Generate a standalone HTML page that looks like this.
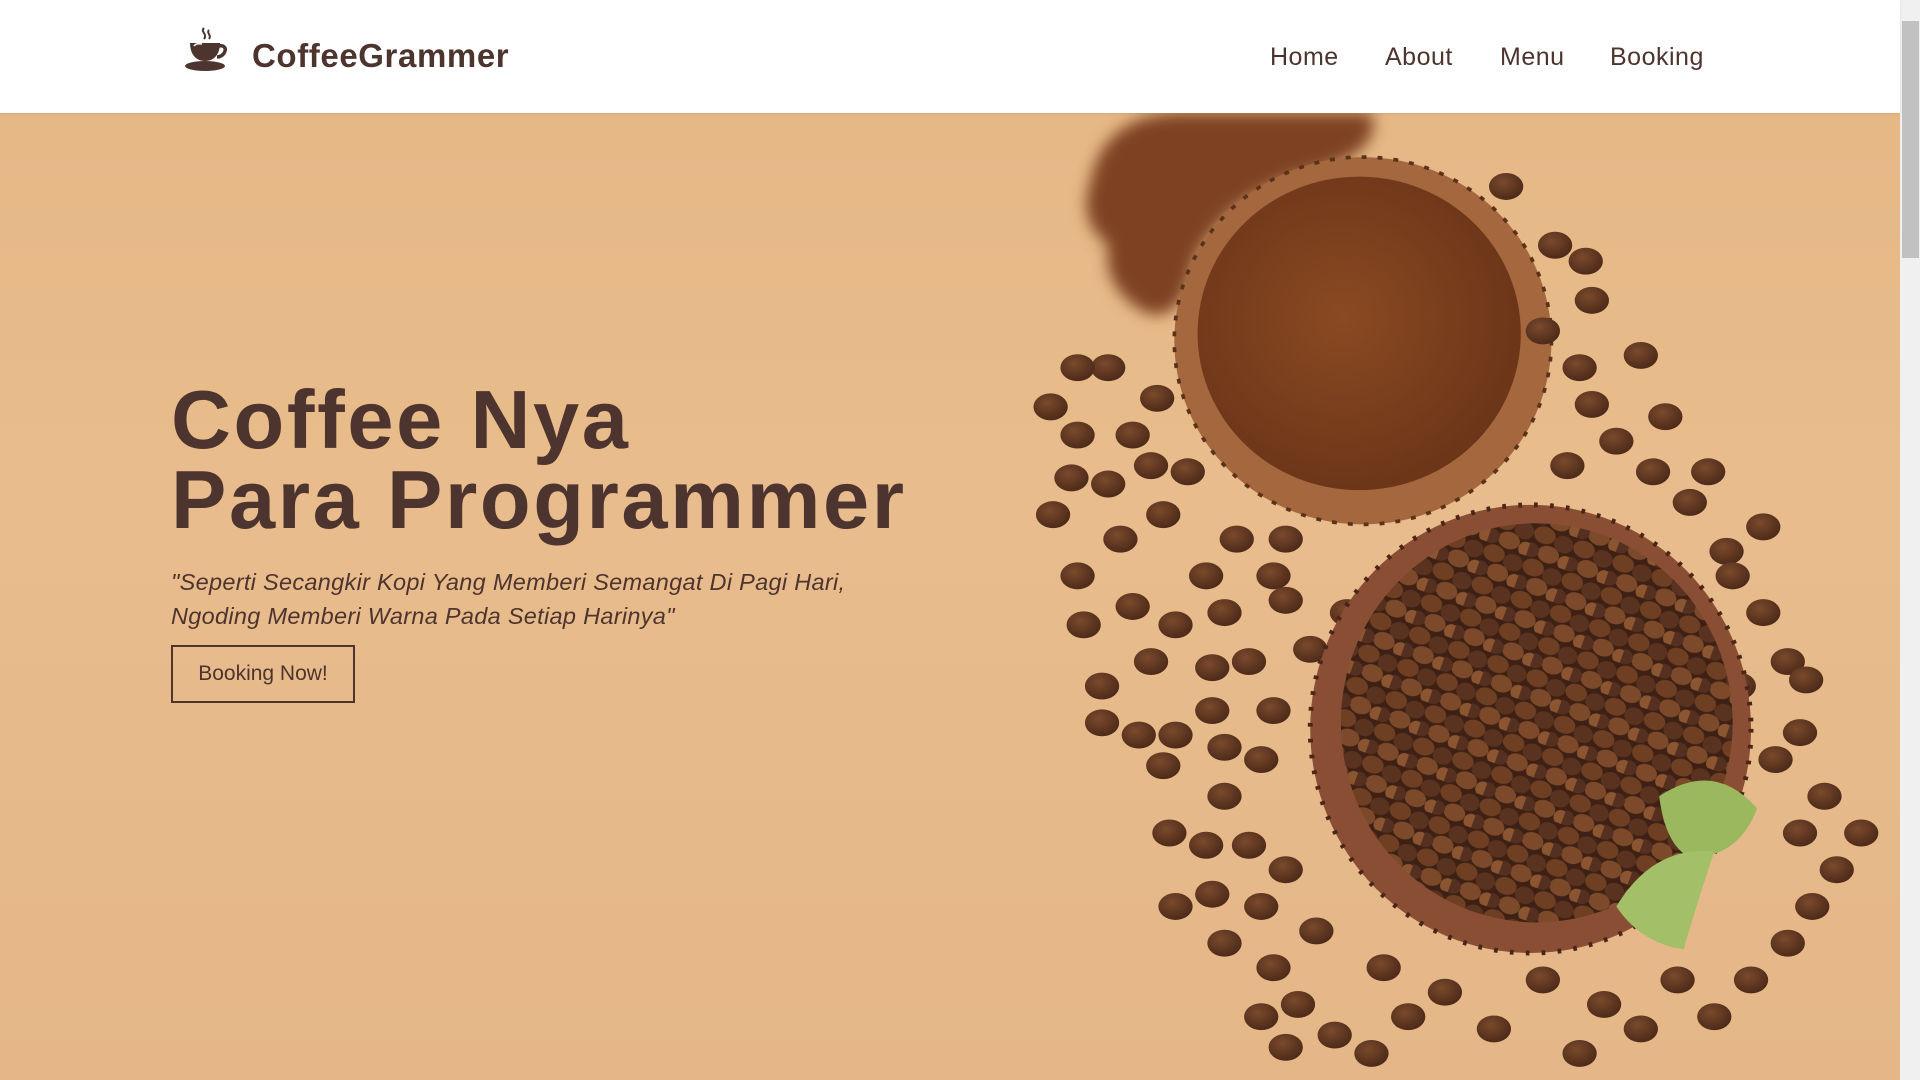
<!DOCTYPE html>
<html><head><meta charset="utf-8"><style>
*{margin:0;padding:0;box-sizing:border-box}
html,body{width:1920px;height:1080px;overflow:hidden;font-family:"Liberation Sans",sans-serif;color:#4e342e}
.hdr{position:absolute;left:0;top:0;width:1900px;height:113px;background:#fff;z-index:2;box-shadow:0 1px 3px rgba(0,0,0,.08)}
.logo{position:absolute;left:252px;top:37px;font-weight:bold;font-size:33px;letter-spacing:.6px;color:#4e342e}
.nav a{position:absolute;top:43px;font-size:25px;color:#4e342e;text-decoration:none;letter-spacing:.5px}
.hero{position:absolute;left:0;top:113px;width:1900px;height:967px;background:linear-gradient(180deg,#e6b886 0%,#e8bc8c 40%,#e5b788 100%)}
h1{position:absolute;left:171px;top:380px;font-size:83px;line-height:80px;font-weight:bold;letter-spacing:2.6px;color:#4e342e;z-index:3}
.sub{position:absolute;left:171px;top:565px;font-size:23.5px;line-height:34px;font-style:italic;color:#4e342e;z-index:3;letter-spacing:.3px}
.btn{position:absolute;left:171px;top:645px;width:184px;height:58px;border:2px solid #4e342e;font-size:21px;line-height:54px;text-align:center;z-index:3}
.sb{position:absolute;left:1900px;top:0;width:20px;height:1080px;background:#f0f0f0}
.sb .th{position:absolute;left:2px;top:21px;width:17px;height:237px;background:#c1c1c1}
</style></head><body>
<div class="hdr">
<svg style="position:absolute;left:182px;top:26px" width="50" height="48" viewBox="0 0 50 48">
<path d="M22 2c-4 4 4 6 0 11M27 4c-3 3 3 5 0 9" stroke="#4e342e" stroke-width="2" fill="none"/>
<path d="M8 17h30c0 10-5 18-15 18S8 27 8 17z" fill="#4e342e"/>
<path d="M37 20c5-1 7 2 6 5-1 4-5 6-8 6" stroke="#4e342e" stroke-width="3.5" fill="none"/>
<ellipse cx="23" cy="40" rx="20" ry="5" fill="#4e342e"/>
<path d="M12 20q2-3 8-2" stroke="#fff" stroke-width="1.5" fill="none"/>
</svg>
<div class="logo">CoffeeGrammer</div>
<div class="nav"><a style="left:1270px">Home</a><a style="left:1385px">About</a><a style="left:1500px">Menu</a><a style="left:1610px">Booking</a></div>
</div>
<div class="hero">
<svg width="1900" height="967" style="position:absolute;left:0;top:0">
<defs>
<pattern id="bp" width="34" height="28" patternUnits="userSpaceOnUse" patternTransform="rotate(20)">
<rect width="34" height="28" fill="#3e2114"/>
<ellipse cx="9" cy="7" rx="9" ry="7" fill="#6e3f22"/>
<ellipse cx="26" cy="9" rx="8" ry="7" fill="#5a3320"/>
<ellipse cx="17" cy="21" rx="9" ry="7" fill="#7c4a2a"/>
<ellipse cx="2" cy="22" rx="7" ry="6" fill="#553020"/>
<ellipse cx="32" cy="23" rx="6" ry="6" fill="#8a5530"/>
</pattern>
<radialGradient id="pw" cx=".45" cy=".45" r=".6"><stop offset="0" stop-color="#8a4a22"/><stop offset="1" stop-color="#6a3418"/></radialGradient>
<radialGradient id="bn" cx=".4" cy=".35" r=".7"><stop offset="0" stop-color="#7a4a2c"/><stop offset="1" stop-color="#4a2818"/></radialGradient>
<filter id="blur"><feGaussianBlur stdDeviation="6"/></filter>
</defs>
<g transform="scale(1.2245) translate(0,-92)">
<path d="M890 150 Q900 95 960 92 L1120 92 Q1130 125 1070 140 Q1000 160 975 215 Q965 265 935 255 Q900 235 905 200 Q880 180 890 150z" fill="#7e4320" filter="url(#blur)"/>
<ellipse cx="1113" cy="278" rx="154" ry="150" fill="#a5673d"/>
<ellipse cx="1113" cy="278" rx="154" ry="150" fill="none" stroke="#5a3218" stroke-width="3" stroke-dasharray="4 9"/>
<ellipse cx="1110" cy="272" rx="132" ry="128" fill="url(#pw)"/>
<g fill="url(#bn)">
<ellipse cx="858" cy="332" rx="14" ry="11"/><ellipse cx="880" cy="355" rx="14" ry="11"/><ellipse cx="875" cy="390" rx="14" ry="11"/><ellipse cx="905" cy="395" rx="14" ry="11"/><ellipse cx="925" cy="355" rx="14" ry="11"/><ellipse cx="945" cy="325" rx="14" ry="11"/><ellipse cx="905" cy="300" rx="14" ry="11"/><ellipse cx="880" cy="300" rx="14" ry="11"/><ellipse cx="940" cy="380" rx="14" ry="11"/><ellipse cx="970" cy="385" rx="14" ry="11"/><ellipse cx="950" cy="420" rx="14" ry="11"/><ellipse cx="915" cy="440" rx="14" ry="11"/><ellipse cx="880" cy="470" rx="14" ry="11"/><ellipse cx="860" cy="420" rx="14" ry="11"/><ellipse cx="885" cy="510" rx="14" ry="11"/><ellipse cx="925" cy="495" rx="14" ry="11"/><ellipse cx="960" cy="510" rx="14" ry="11"/><ellipse cx="1000" cy="500" rx="14" ry="11"/><ellipse cx="1040" cy="470" rx="14" ry="11"/><ellipse cx="1010" cy="440" rx="14" ry="11"/><ellipse cx="985" cy="470" rx="14" ry="11"/><ellipse cx="1050" cy="440" rx="14" ry="11"/><ellipse cx="990" cy="545" rx="14" ry="11"/><ellipse cx="940" cy="540" rx="14" ry="11"/><ellipse cx="900" cy="560" rx="14" ry="11"/><ellipse cx="930" cy="600" rx="14" ry="11"/><ellipse cx="900" cy="590" rx="14" ry="11"/><ellipse cx="960" cy="600" rx="14" ry="11"/><ellipse cx="950" cy="625" rx="14" ry="11"/><ellipse cx="1000" cy="610" rx="14" ry="11"/><ellipse cx="990" cy="580" rx="14" ry="11"/><ellipse cx="1040" cy="580" rx="14" ry="11"/><ellipse cx="1030" cy="620" rx="14" ry="11"/><ellipse cx="1000" cy="650" rx="14" ry="11"/><ellipse cx="955" cy="680" rx="14" ry="11"/><ellipse cx="985" cy="690" rx="14" ry="11"/><ellipse cx="1020" cy="690" rx="14" ry="11"/><ellipse cx="1050" cy="710" rx="14" ry="11"/><ellipse cx="1030" cy="740" rx="14" ry="11"/><ellipse cx="990" cy="730" rx="14" ry="11"/><ellipse cx="960" cy="740" rx="14" ry="11"/><ellipse cx="1000" cy="770" rx="14" ry="11"/><ellipse cx="1040" cy="790" rx="14" ry="11"/><ellipse cx="1075" cy="760" rx="14" ry="11"/><ellipse cx="1060" cy="820" rx="14" ry="11"/><ellipse cx="1030" cy="830" rx="14" ry="11"/><ellipse cx="1050" cy="855" rx="14" ry="11"/><ellipse cx="1090" cy="845" rx="14" ry="11"/><ellipse cx="1120" cy="860" rx="14" ry="11"/><ellipse cx="1150" cy="830" rx="14" ry="11"/><ellipse cx="1130" cy="790" rx="14" ry="11"/><ellipse cx="1180" cy="810" rx="14" ry="11"/><ellipse cx="1220" cy="840" rx="14" ry="11"/><ellipse cx="1260" cy="800" rx="14" ry="11"/><ellipse cx="1290" cy="860" rx="14" ry="11"/><ellipse cx="1310" cy="820" rx="14" ry="11"/><ellipse cx="1340" cy="840" rx="14" ry="11"/><ellipse cx="1370" cy="800" rx="14" ry="11"/><ellipse cx="1400" cy="830" rx="14" ry="11"/><ellipse cx="1430" cy="800" rx="14" ry="11"/><ellipse cx="1460" cy="770" rx="14" ry="11"/><ellipse cx="1480" cy="740" rx="14" ry="11"/><ellipse cx="1500" cy="710" rx="14" ry="11"/><ellipse cx="1470" cy="680" rx="14" ry="11"/><ellipse cx="1490" cy="650" rx="14" ry="11"/><ellipse cx="1450" cy="620" rx="14" ry="11"/><ellipse cx="1420" cy="560" rx="14" ry="11"/><ellipse cx="1460" cy="540" rx="14" ry="11"/><ellipse cx="1440" cy="500" rx="14" ry="11"/><ellipse cx="1475" cy="555" rx="14" ry="11"/><ellipse cx="1470" cy="598" rx="14" ry="11"/><ellipse cx="1440" cy="430" rx="14" ry="11"/><ellipse cx="1410" cy="450" rx="14" ry="11"/><ellipse cx="1380" cy="410" rx="14" ry="11"/><ellipse cx="1350" cy="385" rx="14" ry="11"/><ellipse cx="1360" cy="340" rx="14" ry="11"/><ellipse cx="1300" cy="330" rx="14" ry="11"/><ellipse cx="1290" cy="300" rx="14" ry="11"/><ellipse cx="1340" cy="290" rx="14" ry="11"/><ellipse cx="1260" cy="270" rx="14" ry="11"/><ellipse cx="1300" cy="245" rx="14" ry="11"/><ellipse cx="1270" cy="200" rx="14" ry="11"/><ellipse cx="1295" cy="213" rx="14" ry="11"/><ellipse cx="1230" cy="152" rx="14" ry="11"/><ellipse cx="1280" cy="380" rx="14" ry="11"/><ellipse cx="1320" cy="360" rx="14" ry="11"/><ellipse cx="1395" cy="385" rx="14" ry="11"/><ellipse cx="1415" cy="470" rx="14" ry="11"/><ellipse cx="1100" cy="500" rx="14" ry="11"/><ellipse cx="1070" cy="530" rx="14" ry="11"/><ellipse cx="1050" cy="490" rx="14" ry="11"/><ellipse cx="1020" cy="540" rx="14" ry="11"/><ellipse cx="1520" cy="680" rx="14" ry="11"/>
</g>
<ellipse cx="1250" cy="595" rx="180" ry="183" fill="#8a4e34"/>
<ellipse cx="1250" cy="595" rx="180" ry="183" fill="none" stroke="#4a2616" stroke-width="4" stroke-dasharray="3 10"/>
<ellipse cx="1255" cy="590" rx="160" ry="163" fill="url(#bp)"/>
<path d="M1355 650 Q1400 620 1435 660 Q1420 700 1380 700 Q1360 690 1355 650z" fill="#9bb85e"/>
<path d="M1320 740 Q1350 690 1400 695 Q1385 740 1375 775 Q1340 770 1320 740z" fill="#a3bf68"/>
</g>
</svg>
</div>
<h1>Coffee Nya<br>Para Programmer</h1>
<div class="sub">"Seperti Secangkir Kopi Yang Memberi Semangat Di Pagi Hari,<br>Ngoding Memberi Warna Pada Setiap Harinya"</div>
<div class="btn">Booking Now!</div>
<div class="sb"><div class="th"></div></div>
</body></html>
